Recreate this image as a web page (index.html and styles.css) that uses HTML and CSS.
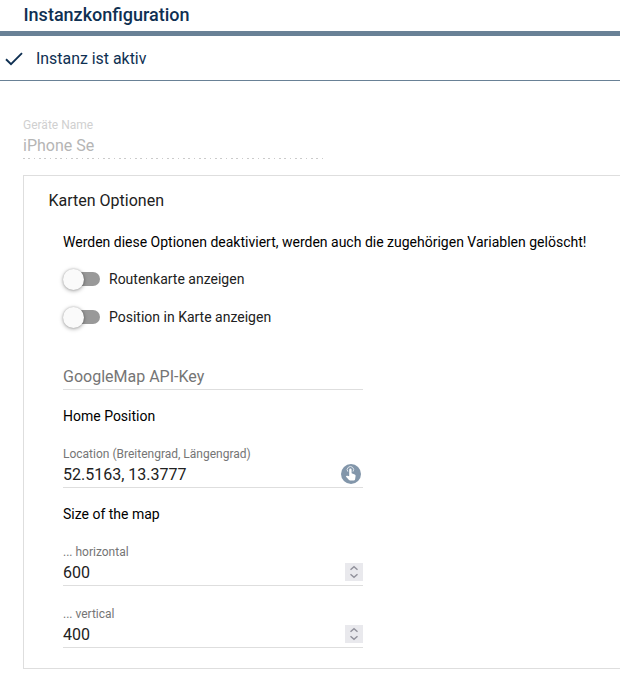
FILE: index.html
```html
<!DOCTYPE html>
<html lang="de">
<head>
<meta charset="utf-8">
<title>Instanzkonfiguration</title>
<link rel="stylesheet" href="styles.css">
</head>
<body>
<header class="header"><h1>Instanzkonfiguration</h1></header>
<div class="status">
  <svg class="check" width="18" height="14" viewBox="0 0 18 14"><path d="M1 7.3 6 12.2 17 1.2" fill="none" stroke="#0f3052" stroke-width="1.9"/></svg>
  <span>Instanz ist aktiv</span>
</div>
<main class="content">
  <div class="field disabled">
    <div class="label">Geräte Name</div>
    <div class="value">iPhone Se</div>
  </div>
  <section class="card">
    <h2>Karten Optionen</h2>
    <div class="options">
      <p class="warning">Werden diese Optionen deaktiviert, werden auch die zugehörigen Variablen gelöscht!</p>
      <div class="toggle-row"><span class="toggle"><span class="thumb"></span></span>Routenkarte anzeigen</div>
      <div class="toggle-row"><span class="toggle"><span class="thumb"></span></span>Position in Karte anzeigen</div>
      <div class="field api">
        <div class="label"></div>
        <div class="value placeholder">GoogleMap API-Key</div>
      </div>
      <h3>Home Position</h3>
      <div class="field">
        <div class="label">Location (Breitengrad, Längengrad)</div>
        <div class="value"><span>52.5163, 13.3777</span>
          <svg class="pick" width="20" height="20" viewBox="0 0 20 20">
            <circle cx="10" cy="10" r="10" fill="#8296aa"/>
            <path d="M6.8 7.6A3.2 3.2 0 1 1 12 7.6" fill="none" stroke="#e4e9ee" stroke-width="1"/>
            <path d="M8.2 5.7a1.2 1.2 0 0 1 2.4 0V9.3l3.1 1.2c.7.3 1 .8.9 1.5l-.5 3.2c-.1.8-.6 1.2-1.3 1.2H9.1c-.5 0-.8-.2-1.1-.5l-3.2-3.4.6-.6c.2-.2.5-.3.8-.2l2 .5Z" fill="#fff"/>
          </svg>
        </div>
      </div>
      <h3>Size of the map</h3>
      <div class="field">
        <div class="label">... horizontal</div>
        <div class="value"><span>600</span>
          <svg class="spinner" width="18" height="18" viewBox="0 0 18 18"><rect width="18" height="18" fill="#e9e9ed"/><path d="M5.5 6.7 9 3.7l3.5 3M5.5 11.3 9 14.3l3.5-3" fill="none" stroke="#92929c" stroke-width="1.5"/></svg>
        </div>
      </div>
      <div class="field next">
        <div class="label">... vertical</div>
        <div class="value"><span>400</span>
          <svg class="spinner" width="18" height="18" viewBox="0 0 18 18"><rect width="18" height="18" fill="#e9e9ed"/><path d="M5.5 6.7 9 3.7l3.5 3M5.5 11.3 9 14.3l3.5-3" fill="none" stroke="#92929c" stroke-width="1.5"/></svg>
        </div>
      </div>
    </div>
  </section>
</main>
</body>
</html>
```
FILE: styles.css
```css
* { box-sizing: border-box; }
body {
  margin: 0;
  background: #fff;
  color: #212121;
  font: 14px Roboto, "Liberation Sans", sans-serif;
  overflow: hidden;
}
h1, h2, h3, p { margin: 0; }
.header {
  height: 36px;
  padding-left: 23.5px;
  border-bottom: 5px solid #698196;
}
h1 {
  font-size: 18px;
  font-weight: 500;
  line-height: 30px;
  color: #0f3052;
}
.status {
  display: flex;
  align-items: center;
  height: 45px;
  padding: 1px 0 0 5px;
  gap: 13px;
  border-bottom: 1px solid #698196;
  font-size: 15.9px;
  color: #0f3052;
}
.content { padding: 36px 0 0 23px; }
.field { width: 300px; border-bottom: 1px solid #dedede; }
.label {
  height: 16px;
  font-size: 12px;
  line-height: 16px;
  color: #757575;
}
.value {
  display: flex;
  align-items: center;
  justify-content: space-between;
  height: 25px;
  font-size: 16px;
}
.placeholder { color: #757575; }
.disabled { border-bottom: 0; }
.disabled .label { color: #d0d0d0; }
.disabled .value { color: #b5b5b5; }
.disabled::after {
  content: "";
  display: block;
  height: 1px;
  background: repeating-linear-gradient(90deg, #cbcbcb 0 1.8px, transparent 1.8px 5.333px);
}
.card {
  height: 494px;
  margin-top: 16px;
  border: 1px solid #dedede;
  border-right: 0;
}
h2 {
  padding-left: 24.5px;
  font-size: 16px;
  font-weight: 400;
  line-height: 50px;
}
.options { padding-left: 39px; }
.warning {
  height: 34px;
  line-height: 32px;
  color: #000;
  white-space: nowrap;
}
.toggle-row { display: flex; align-items: center; height: 38px; gap: 9px; }
.toggle {
  display: flex;
  align-items: center;
  width: 37px;
  height: 14px;
  border-radius: 7px;
  background: linear-gradient(90deg, transparent 8px, #999 8px);
}
.thumb {
  width: 21px;
  height: 21px;
  border-radius: 50%;
  background: #fafafa;
  box-shadow: 0 1px 4px rgba(0, 0, 0, .35), 0 0 2px rgba(0, 0, 0, .2);
}
.api { margin-top: 12px; }
h3 {
  height: 56px;
  font-size: 14px;
  font-weight: 400;
  line-height: 52px;
  color: #000;
}
.next { margin-top: 20px; }
.pick { margin: 0 2px 2px 0; }
.spinner { margin-bottom: 2px; }
```
